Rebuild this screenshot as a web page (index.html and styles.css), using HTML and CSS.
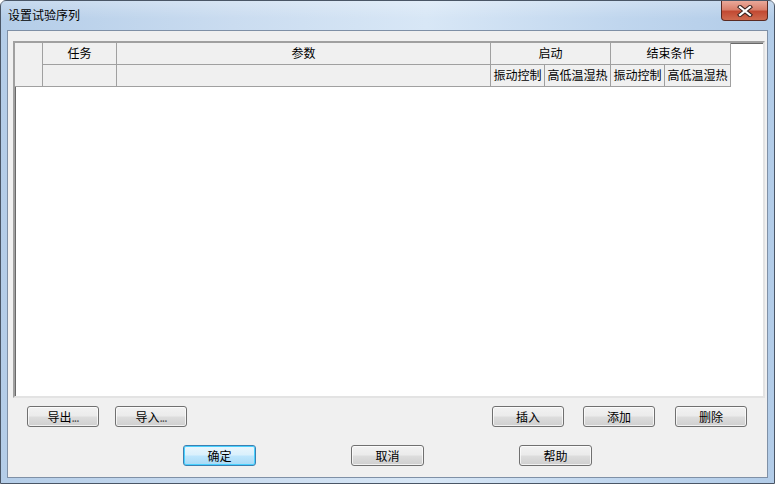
FILE: index.html
```html
<!DOCTYPE html>
<html lang="zh-CN">
	<head>
		<meta charset="UTF-8" />
		<title>设置试验序列</title>
		<link rel="stylesheet" href="styles.css">
	</head>
	<body>
		<div class="window">
			<div class="titlebar">
				<span class="title">设置试验序列</span>
				<div class="close-btn">
					<svg width="16" height="12" viewBox="0 0 16 12">
						<path d="M3 2 L13 10 M13 2 L3 10" stroke="#3a2420" stroke-width="4.2" stroke-linecap="square" />
						<path d="M3 2 L13 10 M13 2 L3 10" stroke="#ffffff" stroke-width="2.2" stroke-linecap="square" />
					</svg>
				</div>
			</div>

			<div class="client">
				<!-- task list -->
				<div class="list">
					<div class="list-header">
						<div class="hcell corner"></div>
						<div class="hcell">任务</div>
						<div class="hcell">参数</div>
						<div class="hcell span2">启动</div>
						<div class="hcell span2">结束条件</div>
						<div class="hcell"></div>
						<div class="hcell"></div>
						<div class="hcell">振动控制</div>
						<div class="hcell">高低温湿热</div>
						<div class="hcell">振动控制</div>
						<div class="hcell">高低温湿热</div>
					</div>
				</div>

				<div class="button-row">
					<div class="group">
						<button class="btn">导出<span class="dots">...</span></button>
						<button class="btn">导入<span class="dots">...</span></button>
					</div>
					<div class="group right">
						<button class="btn">插入</button>
						<button class="btn">添加</button>
						<button class="btn last">删除</button>
					</div>
				</div>

				<div class="dialog-row">
					<button class="btn wide default">确定</button>
					<button class="btn wide">取消</button>
					<button class="btn wide">帮助</button>
				</div>
			</div>
		</div>
	</body>
</html>
```

FILE: styles.css
```css
body {
	margin: 0;
	padding: 0;
	background: #ffffff;
	font-family: "Noto Sans CJK SC", "Noto Sans", sans-serif;
	font-size: 12px;
	color: #000;
}

.window {
	box-sizing: border-box;
	width: 775px;
	height: 484px;
	border: 1px solid #4a5666;
	border-radius: 6px 6px 0 0;
	background: linear-gradient(90deg, #b4cde8 0%, #cadcf0 30%, #d8e7f6 55%, #c0d6ee 80%, #b2cce8 100%);
	display: flex;
	flex-direction: column;
}

.titlebar {
	height: 29px;
	display: flex;
	align-items: flex-start;
	justify-content: space-between;
	background: linear-gradient(180deg, rgba(255,255,255,0.25) 0%, rgba(255,255,255,0) 60%);
}

.title {
	margin: 6px 0 0 7px;
	line-height: 16px;
	color: #000;
}

.close-btn {
	width: 45px;
	height: 19px;
	margin-right: 6px;
	border: 1px solid #5a2a22;
	border-top: none;
	border-radius: 0 0 4px 4px;
	background: linear-gradient(180deg, #e9a99a 0%, #d9806c 45%, #c24a33 55%, #cf6a4f 100%);
	display: flex;
	align-items: center;
	justify-content: center;
}

.client {
	flex: 1;
	margin: 0 6px 5px 6px;
	border: 1px solid #7f90a6;
	background: #f0f0f0;
	display: flex;
	flex-direction: column;
}

.list {
	height: 353px;
	margin: 10px 2px 0 5px;
	border: 2px solid;
	border-color: #a0a0a0 #e3e3e3 #e3e3e3 #a0a0a0;
	box-shadow: inset 1px 1px 0 #696969;
	background: #ffffff;
}

.list-header {
	display: grid;
	grid-template-columns: 28px 74px 374px 54px 66px 54px 66px;
	grid-template-rows: 22px 22px;
	width: 716px;
}

.hcell {
	box-sizing: border-box;
	border-right: 1px solid #a0a0a0;
	border-bottom: 1px solid #a0a0a0;
	background: #f0f0f0;
	line-height: 20px;
	text-align: center;
	white-space: nowrap;
	overflow: hidden;
}

.corner {
	grid-row: span 2;
}

.span2 {
	grid-column: span 2;
}

.button-row {
	display: flex;
	justify-content: space-between;
	margin-top: 8px;
	padding: 0 20px 0 19px;
}

.group {
	display: flex;
	gap: 16px;
}

.group.right {
	gap: 19px;
}

.btn {
	box-sizing: border-box;
	width: 72px;
	height: 21px;
	padding: 0;
	border: 1px solid #707070;
	border-radius: 3px;
	background: linear-gradient(180deg, #f2f2f2 0%, #ebebeb 48%, #dddddd 52%, #cfcfcf 100%);
	box-shadow: inset 0 0 0 1px rgba(255,255,255,0.7);
	font-family: "Noto Sans CJK SC", "Noto Sans", sans-serif;
	font-size: 12px;
	line-height: 17px;
	color: #000;
}

.btn.last {
	margin-left: 1px;
}

.dots {
	color: #555;
	letter-spacing: -1px;
}

.dialog-row {
	display: flex;
	gap: 95px;
	margin-top: 18px;
	padding-left: 175px;
}

.btn.wide {
	width: 73px;
}

.btn.default {
	border-color: #3c7fb1;
	background: linear-gradient(180deg, #eaf6fd 0%, #d9f0fc 48%, #bee6fd 52%, #a7d9f5 100%);
	box-shadow: inset 0 0 0 1px #48d1ff;
}
```
